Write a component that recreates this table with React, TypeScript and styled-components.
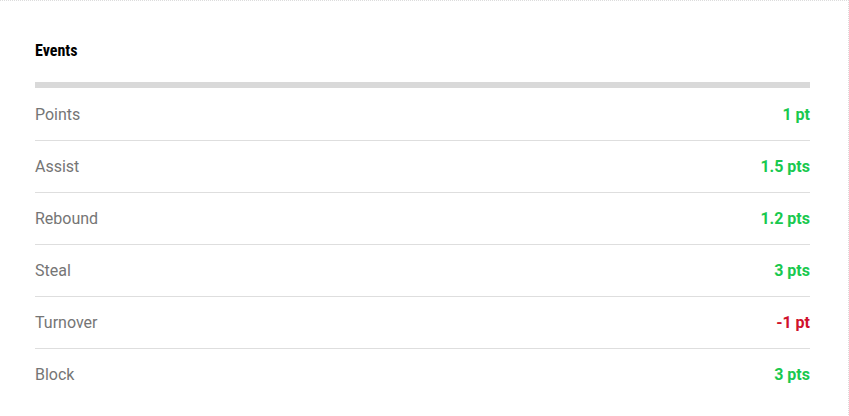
import styled, { createGlobalStyle } from "styled-components";

const GlobalStyle = createGlobalStyle`
  html, body {
    margin: 0;
    padding: 0;
    background: #ffffff;
  }
  body {
    font-family: Roboto, "Liberation Sans", Arial, sans-serif;
  }
`;

type EventRow = {
  label: string;
  value: string;
  negative?: boolean;
};

const events: EventRow[] = [
  { label: "Points", value: "1 pt" },
  { label: "Assist", value: "1.5 pts" },
  { label: "Rebound", value: "1.2 pts" },
  { label: "Steal", value: "3 pts" },
  { label: "Turnover", value: "-1 pt", negative: true },
  { label: "Block", value: "3 pts" },
];

const App = () => {
  return (
    <>
      <GlobalStyle />
      <Card>
        <Title>Events</Title>
        <HeadBar />
        <List>
          {events.map((e) => (
            <Row key={e.label}>
              <Label>{e.label}</Label>
              <Value $negative={e.negative}>{e.value}</Value>
            </Row>
          ))}
        </List>
      </Card>
    </>
  );
};

const Card = styled.div`
  box-sizing: border-box;
  width: 849px;
  min-height: 416px;
  padding: 40px 38px 16px 35px;
  border-top: 1px dotted #dcdcdc;
  border-right: 1px dotted #dcdcdc;
  background: #fff;
`;

const Title = styled.div`
  font-family: Roboto, "Liberation Sans", sans-serif;
  font-size: 16px;
  line-height: 19px;
  font-weight: 700;
  font-stretch: 82%;
  color: #000;
`;

const HeadBar = styled.div`
  height: 6px;
  margin: 22px 0 1px;
  background: #d9d9d9;
`;

const List = styled.div`
  display: flex;
  flex-direction: column;
`;

const Row = styled.div`
  display: flex;
  justify-content: space-between;
  align-items: center;
  box-sizing: border-box;
  height: 52px;
  border-bottom: 1px solid #dedede;
  &:last-child {
    border-bottom-color: transparent;
  }
`;

const Label = styled.span`
  font-size: 16px;
  color: #757575;
`;

const Value = styled.span<{ $negative?: boolean }>`
  font-size: 16px;
  font-weight: 700;
  color: ${(p) => (p.$negative ? "#d0112b" : "#19c94f")};
`;

export default App;
